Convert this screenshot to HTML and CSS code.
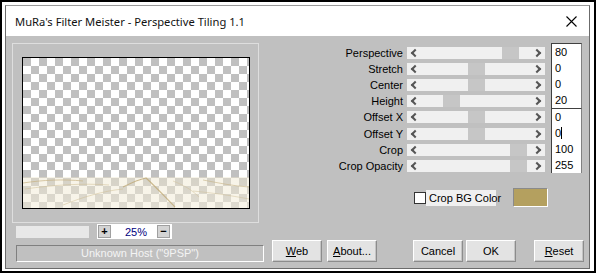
FILE: index.html
```html
<!DOCTYPE html>
<html lang="en">
<head>
    <meta charset="UTF-8">
    <title>MuRa's Filter Meister - Perspective Tiling 1.1</title>
    <link rel="stylesheet" href="styles.css">
</head>
<body>

<div class="frame">
<div class="window">

    <!-- Title bar -->
    <div class="titlebar">
        <span class="title">MuRa's Filter Meister - Perspective Tiling 1.1</span>
        <svg class="close" width="11" height="11" viewBox="0 0 11 11">
            <path d="M0.5 0.5 L10.5 10.5 M10.5 0.5 L0.5 10.5" stroke="#000" stroke-width="1.1" fill="none"/>
        </svg>
    </div>

    <div class="client">
        <div class="main">

            <!-- Preview side -->
            <div class="left">
                <div class="preview-group">
                    <div class="preview">
                        <div class="band">
                            <svg width="226" height="31" viewBox="0 0 226 31">
                                <path d="M0 6 C20 3 40 2 60 4" stroke="#c7b283" stroke-width="1" fill="none" opacity="0.7"/>
                                <path d="M2 12 C30 8 60 6 86 8" stroke="#cdbb90" stroke-width="1" fill="none" opacity="0.5"/>
                                <path d="M100 10 C110 5 118 2 123 1 C132 9 142 20 152 30" stroke="#bea772" stroke-width="1.2" fill="none" opacity="0.75"/>
                                <path d="M40 28 C60 20 80 14 100 12" stroke="#cdbb90" stroke-width="1" fill="none" opacity="0.5"/>
                                <path d="M180 3 C196 6 210 9 226 10" stroke="#c7b283" stroke-width="1" fill="none" opacity="0.6"/>
                                <path d="M170 14 C190 16 205 18 226 22" stroke="#cdbb90" stroke-width="1" fill="none" opacity="0.45"/>
                                <path d="M150 4 C160 8 168 12 176 20" stroke="#d2c29a" stroke-width="1" fill="none" opacity="0.5"/>
                            </svg>
                        </div>
                    </div>
                </div>
                <div class="zoom-row">
                    <div class="progress"></div>
                    <div class="zoom-box">
                        <span class="zbtn">+</span>
                        <span class="zval">25%</span>
                        <span class="zbtn">&minus;</span>
                    </div>
                </div>
            </div>

            <!-- Controls side -->
            <div class="right">
                <div class="params">
                    <div class="sliders">
                        <span class="label">Perspective</span><div class="track"><span class="arr arr-l"></span><div class="lane"><div class="thumb" style="margin-left: 81px"></div></div><span class="arr arr-r"></span></div>
                        <span class="label">Stretch</span><div class="track"><span class="arr arr-l"></span><div class="lane"><div class="thumb" style="margin-left: 47px"></div></div><span class="arr arr-r"></span></div>
                        <span class="label">Center</span><div class="track"><span class="arr arr-l"></span><div class="lane"><div class="thumb" style="margin-left: 47px"></div></div><span class="arr arr-r"></span></div>
                        <span class="label">Height</span><div class="track"><span class="arr arr-l"></span><div class="lane"><div class="thumb" style="margin-left: 22px"></div></div><span class="arr arr-r"></span></div>
                        <span class="label">Offset X</span><div class="track"><span class="arr arr-l"></span><div class="lane"><div class="thumb" style="margin-left: 47px"></div></div><span class="arr arr-r"></span></div>
                        <span class="label">Offset Y</span><div class="track"><span class="arr arr-l"></span><div class="lane"><div class="thumb" style="margin-left: 47px"></div></div><span class="arr arr-r"></span></div>
                        <span class="label">Crop</span><div class="track"><span class="arr arr-l"></span><div class="lane"><div class="thumb" style="margin-left: 89px"></div></div><span class="arr arr-r"></span></div>
                        <span class="label">Crop Opacity</span><div class="track"><span class="arr arr-l"></span><div class="lane"><div class="thumb" style="margin-left: 89px"></div></div><span class="arr arr-r"></span></div>
                    </div>
                    <div class="values">
                        <div class="edit">
                            <div>80</div>
                            <div>0</div>
                            <div>0</div>
                            <div>20</div>
                        </div>
                        <div class="edit">
                            <div>0</div>
                            <div>0<span class="caret"></span></div>
                            <div>100</div>
                            <div>255</div>
                        </div>
                    </div>
                </div>

                <div class="check-row">
                    <span class="checkbox"></span>
                    <span class="check-label">Crop BG Color</span>
                    <span class="swatch"></span>
                </div>
            </div>
        </div>

        <!-- Status and buttons -->
        <div class="bottom">
            <div class="status">Unknown Host ("9PSP")</div>
            <button class="btn btn-web"><u>W</u>eb</button>
            <button class="btn btn-about"><u>A</u>bout...</button>
            <button class="btn btn-cancel">Cancel</button>
            <button class="btn btn-ok">OK</button>
            <button class="btn btn-reset"><u>R</u>eset</button>
        </div>
    </div>

</div>
</div>

</body>
</html>
```

FILE: styles.css
```css
body {
    margin: 0;
    background: #fff;
    font-family: "Liberation Sans", Arial, sans-serif;
    font-size: 11px;
    color: #000;
}

.frame {
    width: 596px;
    height: 273px;
    box-sizing: border-box;
    border: 2px solid #000;
    padding: 3px 4px 2px 3px;
    background: #fff;
}

.window {
    height: 100%;
    box-sizing: border-box;
    border: 1px solid #6b6b6b;
    border-top-color: #9a9a9a;
    display: flex;
    flex-direction: column;
}

/* Title bar */

.titlebar {
    height: 30px;
    flex: none;
    background: #fff;
    display: flex;
    align-items: center;
    padding: 0 9px;
}

.title {
    font-family: "Noto Sans", sans-serif;
    font-size: 11.2px;
    color: #111;
    flex: 1;
}

.close {
    margin-right: 3px;
    margin-top: 1px;
}

/* Client area */

.client {
    flex: 1;
    background: #c0c0c0;
    padding: 7px 3px 3px 6px;
    display: flex;
    flex-direction: column;
}

.main {
    display: flex;
    justify-content: space-between;
    flex: 1;
}

.left {
    width: 247px;
}

.preview-group {
    height: 180px;
    box-sizing: border-box;
    border: 1px solid #dedede;
    padding: 13px 8px 0 9px;
}

.preview {
    width: 226px;
    height: 150px;
    border: 1px solid #000;
    background-color: #fff;
    background-image: conic-gradient(#fff 25%, #c0c0c0 0 50%, #fff 0 75%, #c0c0c0 0);
    background-size: 16px 16px;
    display: flex;
    flex-direction: column;
    justify-content: flex-end;
}

.band {
    height: 31px;
    background: linear-gradient(to bottom, rgba(238, 230, 205, 0.45), rgba(244, 238, 220, 0.6));
}

.band svg {
    display: block;
}

.zoom-row {
    display: flex;
    align-items: center;
    margin-top: 1px;
    padding-left: 4px;
}

.progress {
    width: 73px;
    height: 12px;
    background: #e8e8e8;
}

.zoom-box {
    margin-left: 8px;
    width: 75px;
    height: 15px;
    background: #fff;
    display: flex;
    align-items: center;
    justify-content: space-between;
    padding: 0 2px 0 1px;
    box-sizing: border-box;
}

.zbtn {
    width: 11px;
    height: 11px;
    background: #d4d4d4;
    border: 1px solid #a0a0a0;
    font-size: 11px;
    font-weight: bold;
    line-height: 11px;
    text-align: center;
}

.zval {
    color: #000080;
    font-size: 11px;
    margin-left: 4px;
}

/* Sliders */

.right {
    width: 279px;
}

.params {
    display: flex;
    align-items: flex-start;
}

.sliders {
    margin-top: 1.5px;
    display: grid;
    grid-template-columns: 100px 138px;
    grid-auto-rows: 16.2px;
    align-items: center;
}

.label {
    padding-right: 4px;
    text-align: right;
    white-space: nowrap;
}

.track {
    height: 12px;
    background: #f0f0f0;
    display: grid;
    grid-template-columns: 14px 110px 14px;
}

.arr {
    display: flex;
    align-items: center;
    justify-content: center;
}

.arr::before {
    content: "";
    width: 4px;
    height: 4px;
    border-left: 2px solid #555;
    border-bottom: 2px solid #555;
}

.arr-l::before {
    transform: translateX(1px) rotate(45deg);
}

.arr-r::before {
    transform: translateX(-1px) rotate(-135deg);
}

.lane {
    display: flex;
}

.thumb {
    width: 17px;
    height: 12px;
    background: #c6c6c6;
}

.values {
    margin-left: 6px;
    width: 31px;
}

.edit {
    background: #fff;
    border-top: 1px solid #404040;
    border-left: 1px solid #404040;
    border-right: 1px solid #808080;
}

.edit div {
    height: 16px;
    line-height: 16px;
    padding-left: 3px;
    color: #000;
}

.caret {
    display: inline-block;
    width: 1px;
    height: 12px;
    background: #000;
    vertical-align: -2px;
}

/* Crop BG Color */

.check-row {
    display: flex;
    align-items: center;
    height: 19px;
    margin-top: 14px;
    margin-left: 107px;
}

.checkbox {
    width: 10px;
    height: 10px;
    background: #fff;
    border: 1px solid #333;
}

.check-label {
    width: 70px;
    height: 16px;
    box-sizing: border-box;
    line-height: 16px;
    background: #f0f0f0;
    padding-left: 3px;
    white-space: nowrap;
}

.swatch {
    margin-left: 17px;
    width: 33px;
    height: 17px;
    background: #b4a05f;
    border: 1px solid;
    border-color: #8a8a8a #fff #fff #8a8a8a;
}

/* Bottom row */

.bottom {
    display: flex;
    align-items: flex-start;
    height: 25px;
}

.status {
    margin-left: 4px;
    margin-top: 5px;
    width: 248px;
    height: 17px;
    box-sizing: border-box;
    border: 1px solid;
    border-color: #808080 #fff #fff #808080;
    color: #f4f4f4;
    text-align: center;
    line-height: 15px;
}

.btn {
    width: 50px;
    height: 22px;
    padding: 0;
    font-family: "Liberation Sans", Arial, sans-serif;
    font-size: 11px;
    color: #000;
    background: #e3e3e3;
    border: 1px solid;
    border-color: #fff #8c8c8c #8c8c8c #fff;
    box-shadow: inset -1px -1px 0 #c4c4c4;
}

.btn-web {
    margin-left: 8px;
}

.btn-about {
    margin-left: 5px;
}

.btn-cancel {
    margin-left: 36px;
}

.btn-ok {
    margin-left: 3px;
}

.btn-reset {
    margin-left: 18px;
}
```
